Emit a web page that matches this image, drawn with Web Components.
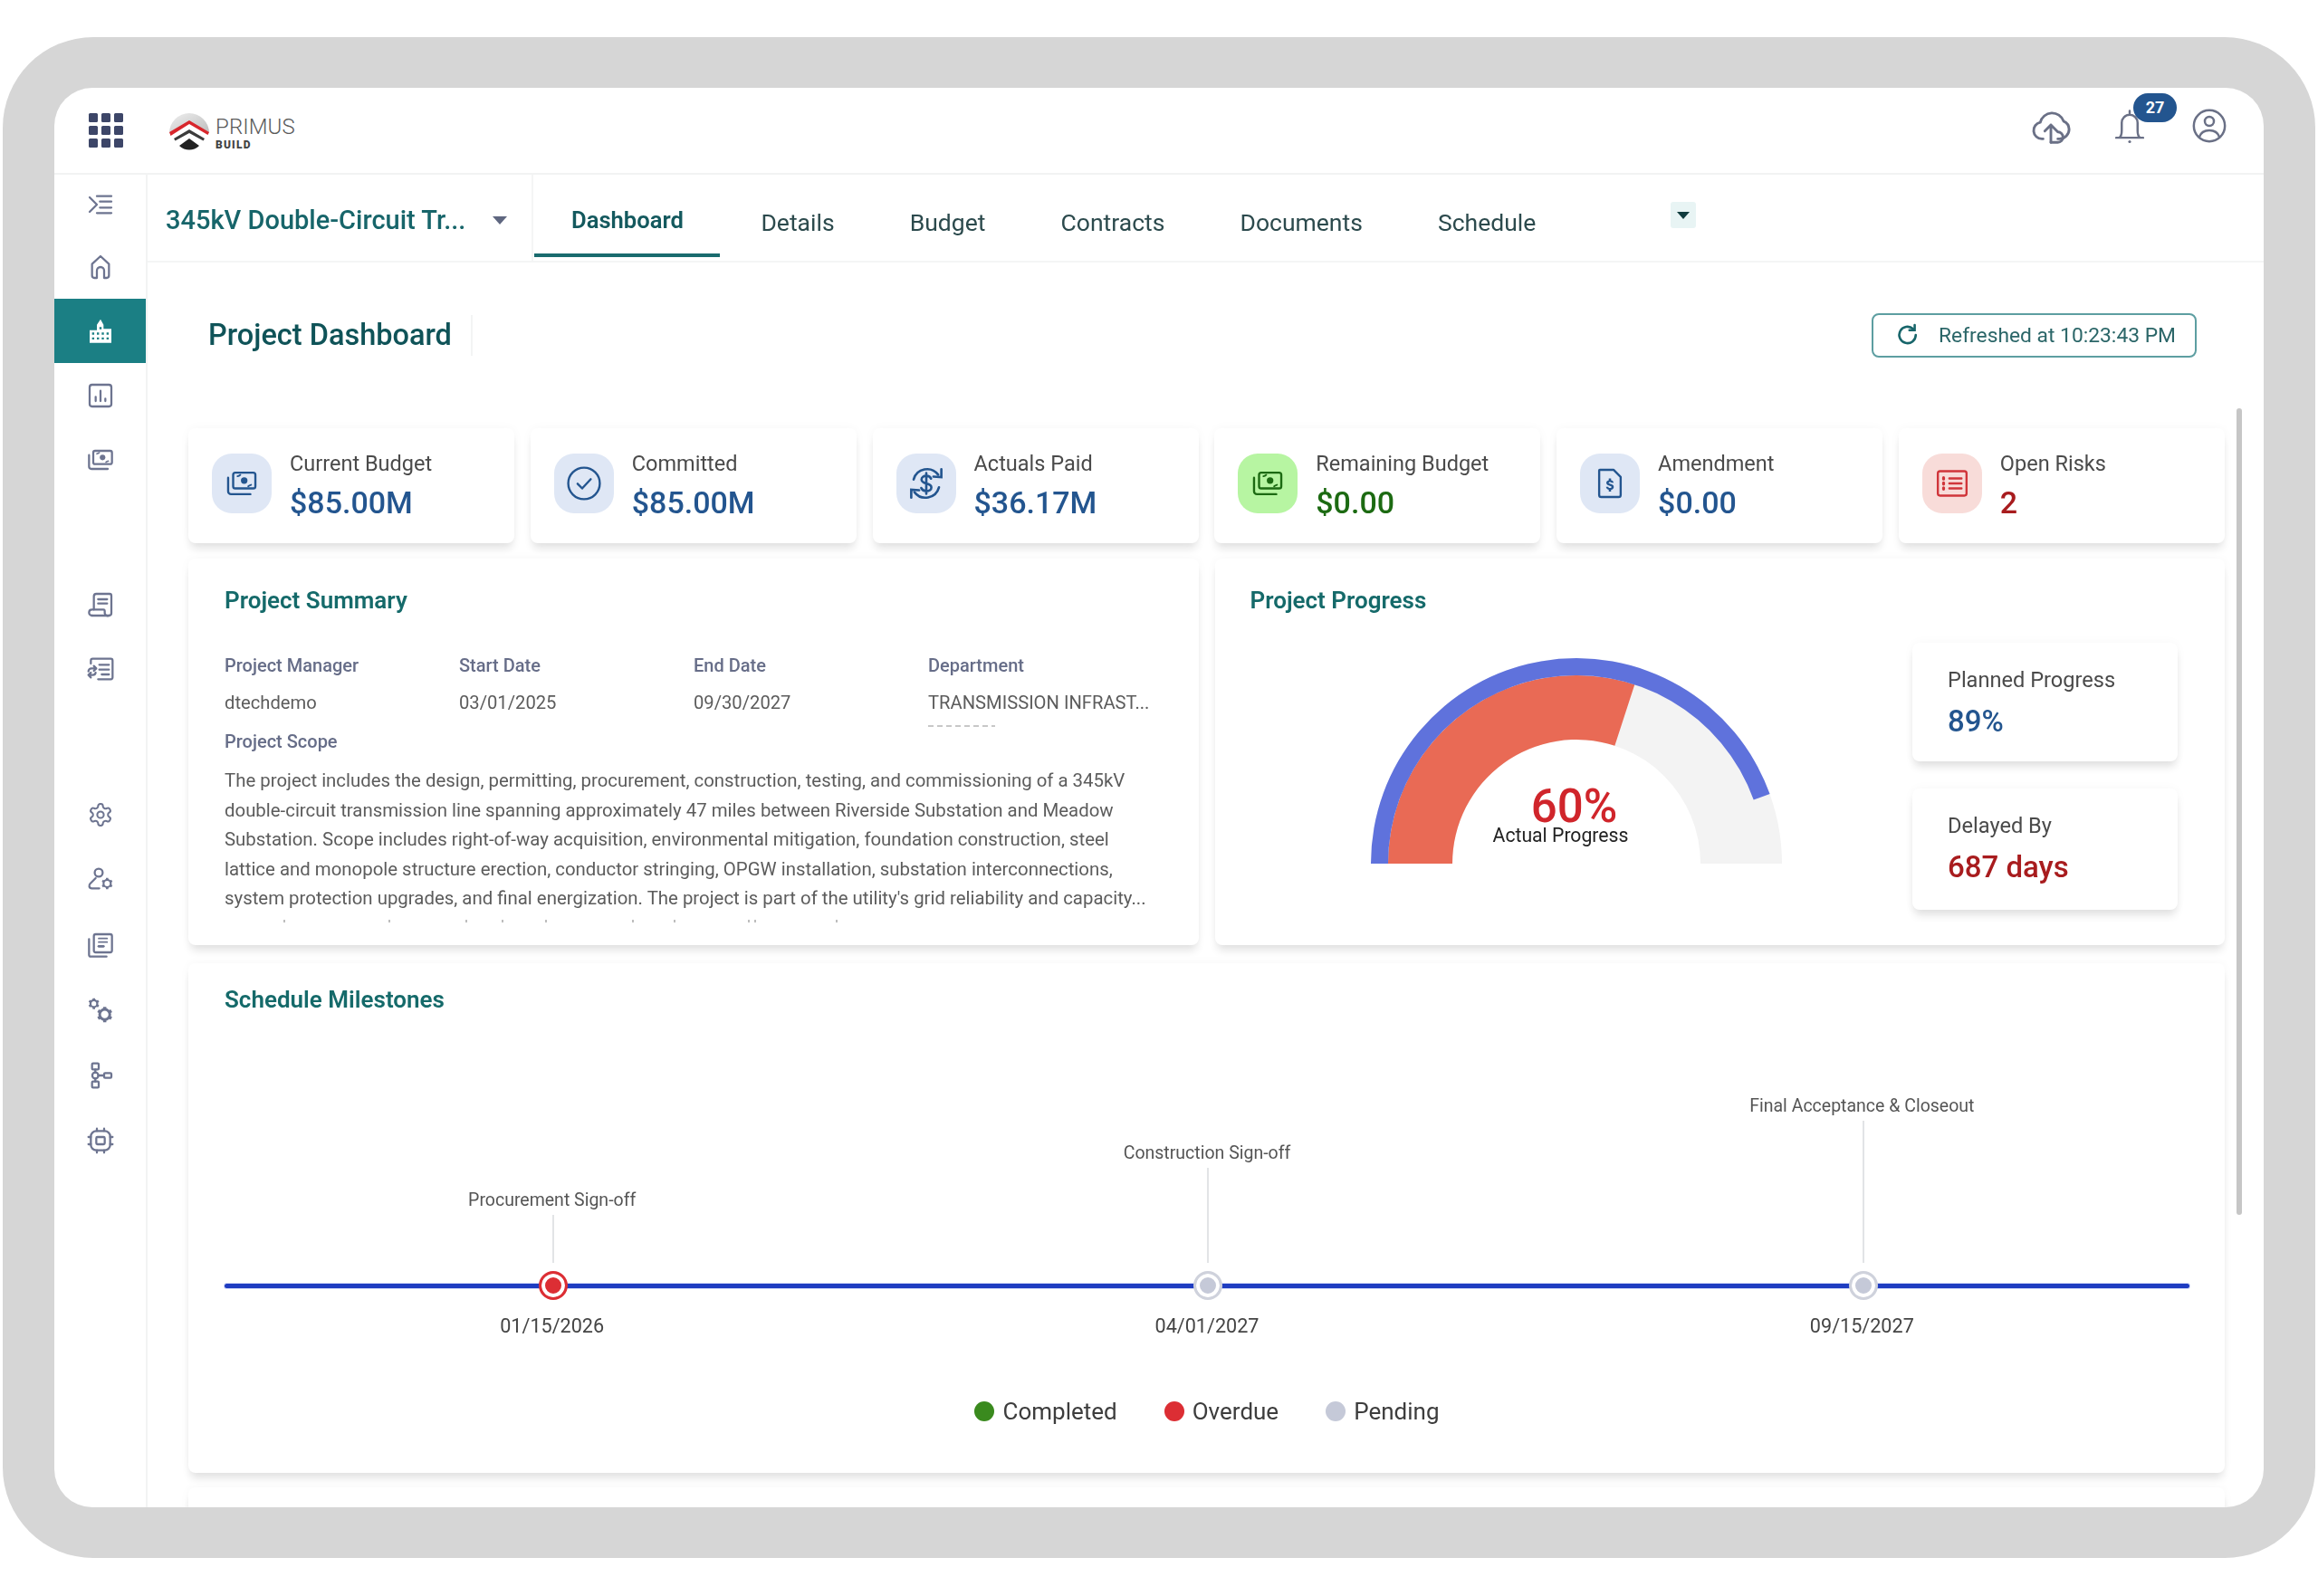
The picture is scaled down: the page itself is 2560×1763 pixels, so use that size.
<!doctype html>
<html lang="en">
<head>
<meta charset="utf-8">
<title>Project Dashboard</title>
<style>
  html, body { margin: 0; padding: 0; background: #fff; }
  body { font-family: Roboto, "Liberation Sans", sans-serif; }
</style>
</head>
<body>
<pb-app>
  <pb-header slot="header"></pb-header>
  <pb-sidebar slot="sidebar"></pb-sidebar>
  <pb-tabs slot="tabs" project="345kV Double-Circuit Tr...">
    <pb-tab active>Dashboard</pb-tab>
    <pb-tab>Details</pb-tab>
    <pb-tab>Budget</pb-tab>
    <pb-tab>Contracts</pb-tab>
    <pb-tab>Documents</pb-tab>
    <pb-tab>Schedule</pb-tab>
  </pb-tabs>
  <pb-title-row slot="title" refreshed="Refreshed at 10:23:43 PM">Project Dashboard</pb-title-row>

  <pb-kpi-row>
    <pb-kpi icon="money" label="Current Budget" value="$85.00M"></pb-kpi>
    <pb-kpi icon="check" label="Committed" value="$85.00M"></pb-kpi>
    <pb-kpi icon="cycle" icon-size="42" label="Actuals Paid" value="$36.17M"></pb-kpi>
    <pb-kpi icon="money" tone="green" label="Remaining Budget" value="$0.00"></pb-kpi>
    <pb-kpi icon="amend" label="Amendment" value="$0.00"></pb-kpi>
    <pb-kpi icon="risk" tone="red" label="Open Risks" value="2"></pb-kpi>
  </pb-kpi-row>

  <pb-split>
    <pb-summary></pb-summary>
    <pb-progress></pb-progress>
  </pb-split>

  <pb-milestones>
    <pb-milestone state="overdue" stem="53" label="Procurement Sign-off" date="01/15/2026"></pb-milestone>
    <pb-milestone state="pending" stem="105" label="Construction Sign-off" date="04/01/2027"></pb-milestone>
    <pb-milestone state="pending" stem="157" label="Final Acceptance &amp; Closeout" date="09/15/2027"></pb-milestone>
  </pb-milestones>
  <pb-next-card></pb-next-card>
</pb-app>

<script>
const GEAR = "M12.22 2h-.44a2 2 0 0 0-2 2v.18a2 2 0 0 1-1 1.73l-.43.25a2 2 0 0 1-2 0l-.15-.08a2 2 0 0 0-2.73.73l-.22.38a2 2 0 0 0 .73 2.73l.15.1a2 2 0 0 1 1 1.72v.51a2 2 0 0 1-1 1.74l-.15.09a2 2 0 0 0-.73 2.73l.22.38a2 2 0 0 0 2.73.73l.15-.08a2 2 0 0 1 2 0l.43.25a2 2 0 0 1 1 1.73V20a2 2 0 0 0 2 2h.44a2 2 0 0 0 2-2v-.18a2 2 0 0 1 1-1.73l.43-.25a2 2 0 0 1 2 0l.15.08a2 2 0 0 0 2.73-.73l.22-.39a2 2 0 0 0-.73-2.73l-.15-.08a2 2 0 0 1-1-1.74v-.5a2 2 0 0 1 1-1.74l.15-.09a2 2 0 0 0 .73-2.73l-.22-.38a2 2 0 0 0-2.73-.73l-.15.08a2 2 0 0 1-2 0l-.43-.25a2 2 0 0 1-1-1.73V4a2 2 0 0 0-2-2z";

// small cog: a ring with stubby teeth, reads better than GEAR under 20px
const cog = (cx, cy, r, w) => {
  let teeth = "";
  for (let i = 0; i < 6; i++) {
    const a = (i * Math.PI) / 3 + Math.PI / 6;
    const c = Math.cos(a);
    const s = Math.sin(a);
    teeth += `M${(cx + r * c).toFixed(2)} ${(cy + r * s).toFixed(2)}L${(cx + (r + w) * c).toFixed(2)} ${(cy + (r + w) * s).toFixed(2)}`;
  }
  return `<circle cx="${cx}" cy="${cy}" r="${r}" stroke-width="${w}"/><path d="${teeth}" stroke-width="${w * 1.2}" stroke-linecap="butt"/>`;
};

const ICONS = {
  indent: `<path d="M3 6l6 6-6 6"/><path d="M9 5h12M11.500 9.500H21M11.500 14.500H21M9 19h12"/>`,
  home: `<path d="M12 3 5 9.500v9.500a2 2 0 0 0 2 2h2v-6a3 3 0 0 1 6 0v6h2a2 2 0 0 0 2-2V9.500z"/>`,
  building: `<path fill="currentColor" stroke="none" fill-rule="evenodd" d="M12 2l2.500 4.500V10H21v11.500H3V11H9V6.500zM5 13v1.800h1.800V13zM9 13v1.800h1.800V13zM13 13v1.800h1.800V13zM17 13v1.800h1.800V13zM5 17v1.800h1.800V17zM9 17v1.800h1.800V17zM13 17v1.800h1.800V17zM17 17v1.800h1.800V17zM11.100 8.500v1.800h1.800V8.500z"/>`,
  chart: `<rect x="3" y="3" width="18" height="18" rx="2"/><path d="M8 16.500v-3.500M12 16.500V8M16 16.500v-2"/>`,
  money: `<rect x="6" y="4.500" width="15.500" height="11" rx="1.500"/><circle cx="13.700" cy="10" r="2.300" fill="currentColor" stroke="none"/><path d="M9 7c1.500-.4 1.700-.8 2-1M18.500 13c-1.500.4-1.700.8-2 1" stroke-width="1.200"/><path d="M2.500 8v9.500a2 2 0 0 0 2 2H18"/>`,
  scroll: `<path d="M6.500 16V5a2 2 0 0 1 2-2h11A1.500 1.500 0 0 1 21 4.500V19a2 2 0 0 1-2 2H5"/><path d="M5 21a2.500 2.500 0 0 1-2.500-2.500c0-1.500 1-2.500 2.500-2.500h9.500c.8 0 1 .6 1 1.500V19a2.500 2.500 0 0 0 3.500 2"/><path d="M10 7.500h7.500M10 11h7.500"/>`,
  listsync: `<path d="M4 7.500V5a1.500 1.500 0 0 1 1.500-1.500h15A1.500 1.500 0 0 1 22 5v14a1.500 1.500 0 0 1-1.500 1.500H10"/><path d="M11 8.500h8M11 12.500h8M13 16.500h6"/><path d="M8 11.500H4.500A2.500 2.500 0 0 0 2 14M6.500 9.500l2 2-2 2M2 17h3.500A2.500 2.500 0 0 0 8 15M4 15l-2 2 2 2"/>`,
  gear: `<g transform="translate(1.200 1.200) scale(.9)"><path d="${GEAR}"/><circle cx="12" cy="12" r="3"/></g>`,
  usergear: `<circle cx="10.500" cy="6" r="3.300"/><path d="M8 10.500 3.500 15c-1.500 1.500-1 4 1.300 4H11"/>${cog(17.500, 15, 3, 1.600)}`,
  docstack: `<rect x="6.500" y="3" width="15" height="15" rx="1.500"/><path d="M10.500 6.500h7M10.500 9.500h7" stroke-width="1.300"/><path d="M10.500 13h4" stroke-width="2"/><path d="M2.500 7v13a1.500 1.500 0 0 0 1.500 1.500h13"/>`,
  gears: `${cog(6.500, 6.500, 2.800, 1.700)}${cog(15.500, 15.500, 4.200, 2.200)}`,
  flow: `<rect x="5" y="2" width="5.500" height="5" rx=".8"/><rect x="5" y="17" width="5.500" height="5" rx=".8"/><circle cx="7.700" cy="12" r="2.500"/><rect x="15" y="10" width="6" height="4" rx=".8"/><path d="M7.700 7v2.500M7.700 14.500V17M10.200 12H15"/>`,
  chip: `<rect x="4" y="4" width="16" height="16" rx="4.500"/><rect x="8.500" y="9" width="7" height="6" rx="1"/><path d="M9 2v2M15 2v2M9 20v2M15 20v2M2 9h2M2 15h2M20 9h2M20 15h2"/>`,
  check: `<circle cx="12" cy="12" r="11"/><path d="M7.500 12.200l3.200 3.300 6-6.500"/>`,
  cycle: `<path d="M4 9.500A8.800 8.800 0 0 1 19.500 6.500M20 14.500A8.800 8.800 0 0 1 4.500 17.500"/><path d="M21.500 3v5l-5-.3M2.500 21v-5l5 .3" stroke-linejoin="miter"/><path d="M15 9c-.5-1.300-1.500-1.800-3-1.800-1.700 0-3 .9-3 2.300 0 3.300 6.200 1.700 6.200 5 0 1.400-1.400 2.300-3.200 2.300-1.500 0-2.700-.6-3.200-1.900M12 5.500v13"/>`,
  amend: `<path d="M5 2.500h9.500L19.500 7.500V20a1.500 1.500 0 0 1-1.500 1.500H6A1.500 1.500 0 0 1 4.500 20V3a.5.5 0 0 1 .5-.5z"/><path fill="currentColor" stroke="none" d="M11.200 8.500h1.600v1.300c1 .2 1.700.8 1.800 1.800h-1.500c-.1-.4-.4-.6-1-.6s-1 .2-1 .6c0 1 3.600.5 3.600 2.900 0 1-.8 1.700-1.900 1.900v1.300h-1.600V16.400c-1.100-.2-1.900-1-1.900-2h1.500c.1.500.5.800 1.200.8s1.100-.3 1.100-.7c0-1.100-3.600-.5-3.600-2.900 0-.9.700-1.600 1.700-1.800z"/>`,
  risk: `<rect x="2" y="3.500" width="20" height="17" rx="1.500"/><path d="M6 8v1M6 11.500v1M6 15v1" stroke-width="2"/><path d="M10 8.500h8.500M10 12h8.500M10 15.500h8.500"/>`,
  cloud: `<path d="M7.500 19.500H6.800a4.800 4.800 0 0 1-.9-9.500 7 7 0 0 1 13.400-.7A5.300 5.300 0 0 1 22.500 14a5.500 5.500 0 0 1-5.500 5.500h-1"/><path d="M12 21.500V11.500M8.500 15l3.500-3.500 3.500 3.500"/><path d="M12 21.500h4a3 3 0 0 0 0-6"/>`,
  bell: `<path d="M12 2.500v1.500M5.500 19.500c1.300-1 1.500-2.500 1.500-4.500v-5a5 5 0 0 1 10 0v5c0 2 .2 3.500 1.500 4.500zM3.500 19.500h17"/><circle cx="12" cy="22" r=".9" fill="currentColor" stroke="none"/>`,
  user: `<circle cx="12" cy="12" r="10.300"/><circle cx="12" cy="9" r="3"/><path d="M5.300 19.500c1-3 3.700-4.500 6.700-4.500s5.700 1.500 6.700 4.500"/>`,
  refresh: `<path d="M19.500 12a7.800 7.800 0 1 1-2.600-5.800"/><path d="M18.500 2.500v5h-5" stroke-linejoin="miter"/>`
};

class PbIcon extends HTMLElement {
  connectedCallback() {
    const name = this.getAttribute("name");
    const size = this.getAttribute("size") || 24;
    const stroke = this.getAttribute("stroke") || 1.8;
    this.attachShadow({ mode: "open" });
    this.shadowRoot.innerHTML = `
      <style>
        :host { display: inline-flex; flex: none; }
        svg { display: block; fill: none; stroke: currentColor; stroke-linecap: round; stroke-linejoin: round; }
      </style>
      <svg width="${size}" height="${size}" viewBox="0 0 24 24" stroke-width="${stroke}">${ICONS[name]}</svg>`;
  }
}
customElements.define("pb-icon", PbIcon);

class PbApp extends HTMLElement {
  constructor() {
    super();
    this.attachShadow({ mode: "open" });
    this.shadowRoot.innerHTML = `
      <style>
        :host { display: block; box-sizing: border-box; height: 1763px; padding: 41px 3px 42px 3px; }
        .frame { box-sizing: border-box; height: 1680px; padding: 56px 57px 56px 57px; background: #d6d6d6; border-radius: 100px; }
        .screen {
          height: 100%; display: grid; grid-template-columns: 103px minmax(0, 1fr); grid-template-rows: 96px 97px 158px 1fr;
          background: #fff; border-radius: 42px; overflow: hidden; position: relative; filter: blur(.7px);
        }
        .head { grid-column: 1 / 3; }
        .side { grid-row: 2 / 5; }
        .main { box-sizing: border-box; min-height: 0; padding: 25px 43px 0 45px; display: flex; flex-direction: column; overflow: hidden; }
        .thumb { position: absolute; left: 2410px; top: 354px; width: 6px; height: 891px; background: #c6c6c6; border-radius: 3px; }
      </style>
      <div class="frame">
        <div class="screen">
          <div class="head"><slot name="header"></slot></div>
          <div class="side"><slot name="sidebar"></slot></div>
          <slot name="tabs"></slot>
          <slot name="title"></slot>
          <div class="main"><slot></slot></div>
          <div class="thumb"></div>
        </div>
      </div>`;
  }
}
customElements.define("pb-app", PbApp);

class PbHeader extends HTMLElement {
  constructor() {
    super();
    this.attachShadow({ mode: "open" });
    this.shadowRoot.innerHTML = `
      <style>
        :host { display: flex; box-sizing: border-box; height: 96px; align-items: center; padding: 0 40px 0 38px; border-bottom: 2px solid #f2f3f3; }
        .apps { display: grid; grid-template-columns: repeat(3, 10px); grid-auto-rows: 10px; gap: 4px; }
        .apps i { background: #3d4668; border-radius: 1.5px; }
        .logo { display: flex; align-items: center; gap: 6px; margin-left: 50px; }
        .word { display: flex; flex-direction: column; color: #555; padding-top: 5px; }
        .word b { font: 300 24px/24px Roboto, sans-serif; color: #5a5a5a; letter-spacing: .1px; }
        .word span { font: 900 12px/12px Roboto, sans-serif; letter-spacing: 1.2px; color: #444; margin-top: 2px; }
        .tools { margin-left: auto; display: flex; align-items: center; color: #6a7086; padding-bottom: 11px; }
        .bell { position: relative; display: flex; margin: 0 47px 0 43px; }
        .badge { position: absolute; left: 25px; top: -15px; width: 48px; height: 32px; background: #23558f; color: #fff; border-radius: 16px; font: 700 18px/32px Roboto, sans-serif; text-align: center; }
      </style>
      <div class="apps">${"<i></i>".repeat(9)}</div>
      <div class="logo">
        <svg width="46" height="44" viewBox="0 0 46 44">
          <defs><linearGradient id="dome" x1="0" y1="0" x2="1" y2="1"><stop offset="0" stop-color="#efefef"/><stop offset="1" stop-color="#bdbdbd"/></linearGradient></defs>
          <path d="M1 25a22 22 0 0 1 44 0L23 12z" fill="url(#dome)"/>
          <path d="M1 24 23 11l22 13-1.500 3L23 15 2.500 28z" fill="#d8262c"/>
          <path d="M6 31 23 21l17 10-1.500 2.500L23 25 7.500 33.500z" fill="#3c3c3c"/>
          <path d="M12 39 23 31l11 8c-3 3-7 4.500-11 4.500S15 42 12 39z" fill="#222"/>
        </svg>
        <div class="word"><b>PRIMUS</b><span>BUILD</span></div>
      </div>
      <div class="tools">
        <pb-icon name="cloud" size="46" stroke="1.500"></pb-icon>
        <div class="bell"><pb-icon name="bell" size="42" stroke="1.400"></pb-icon><div class="badge">27</div></div>
        <pb-icon name="user" size="40" stroke="1.500"></pb-icon>
      </div>`;
  }
}
customElements.define("pb-header", PbHeader);

class PbSidebar extends HTMLElement {
  constructor() {
    super();
    this.attachShadow({ mode: "open" });
    const items = [
      ["indent"], ["home"], ["building", "on"], ["chart"], ["money", "brk"],
      ["scroll"], ["listsync", "brk"],
      ["gear", "low"], ["usergear", "low"], ["docstack", "low"], ["gears", "low"], ["flow", "low"], ["chip", "low"]
    ];
    this.shadowRoot.innerHTML = `
      <style>
        :host { display: block; box-sizing: border-box; height: 100%; border-right: 2px solid #f2f3f3; color: #6d7490; }
        .item { height: 71px; display: flex; align-items: center; justify-content: center; }
        .item:first-of-type { height: 66px; }
        .low { height: 72px; }
        .on { background: #1b7f84; color: #fff; }
        .brk { margin-bottom: 89.500px; }
      </style>
      ${items.map(([n, c]) => `<div class="item ${c || ""}"><pb-icon name="${n}" size="32" stroke="1.700"></pb-icon></div>`).join("")}`;
  }
}
customElements.define("pb-sidebar", PbSidebar);

class PbTabs extends HTMLElement {
  connectedCallback() {
    this.attachShadow({ mode: "open" });
    this.shadowRoot.innerHTML = `
      <style>
        :host { display: flex; box-sizing: border-box; height: 97px; border-bottom: 2px solid #f4f5f5; }
        .project { width: 426px; flex: none; box-sizing: border-box; padding: 5px 0 0 20px; display: flex; align-items: center; border-right: 2px solid #f4f5f5; color: #17656a; font-size: 29px; font-weight: 500; white-space: nowrap; }
        .caret { margin-left: 30px; width: 0; height: 0; border: 8px solid transparent; border-top: 9px solid #5f6780; border-bottom: 0; }
        .more { align-self: flex-start; margin: 30px 0 0 107px; width: 28px; height: 29px; background: #e8f4f4; border-radius: 3px; display: flex; align-items: center; justify-content: center; }
        .more i { width: 0; height: 0; border: 7px solid transparent; border-top: 8px solid #0f3b3d; border-bottom: 0; }
      </style>
      <div class="project">${this.getAttribute("project")}<span class="caret"></span></div>
      <slot></slot>
      <div class="more"><i></i></div>`;
  }
}
customElements.define("pb-tabs", PbTabs);

class PbTab extends HTMLElement {
  constructor() {
    super();
    this.attachShadow({ mode: "open" });
    this.shadowRoot.innerHTML = `
      <style>
        :host { display: flex; align-items: center; box-sizing: border-box; height: 91px; padding: 13px 41.600px 0; color: #2c4a4d; font-size: 26.500px; white-space: nowrap; }
        :host([active]) { padding: 12px 40px 0 41px; margin: 0 4px 0 1px; color: #14595e; font-size: 25.600px; font-weight: 600; border-bottom: 4px solid #1a6b6e; }
      </style>
      <slot></slot>`;
  }
}
customElements.define("pb-tab", PbTab);

class PbTitleRow extends HTMLElement {
  connectedCallback() {
    this.attachShadow({ mode: "open" });
    this.shadowRoot.innerHTML = `
      <style>
        :host { display: flex; align-items: center; height: 158px; box-sizing: border-box; padding: 2px 74px 0 67px; }
        h1 { margin: 0; padding-right: 21px; border-right: 2px solid #f3f4f4; height: 45px; font-size: 32.500px; line-height: 45px; font-weight: 500; color: #0f5358; white-space: nowrap; }
        .refresh { margin-left: auto; box-sizing: border-box; width: 359px; height: 49px; display: flex; align-items: center; gap: 20px; padding-left: 24px; border: 2px solid #5d9ea1; border-radius: 8px; color: #2b6668; font-size: 22.800px; white-space: nowrap; }
        pb-icon { color: #17656a; }
      </style>
      <h1><slot></slot></h1>
      <div class="refresh"><pb-icon name="refresh" size="28" stroke="2.200"></pb-icon>${this.getAttribute("refreshed")}</div>`;
  }
}
customElements.define("pb-title-row", PbTitleRow);

class PbKpiRow extends HTMLElement {
  constructor() {
    super();
    this.attachShadow({ mode: "open" });
    this.shadowRoot.innerHTML = `
      <style>:host { display: grid; grid-template-columns: repeat(6, minmax(0, 1fr)); gap: 17.600px; height: 127px; flex: none; margin-bottom: 17px; }</style>
      <slot></slot>`;
  }
}
customElements.define("pb-kpi-row", PbKpiRow);

const CARD_SHADOW = "0 8px 10px -2px rgba(0,0,0,.11), 0 0 12px rgba(0,0,0,.035)";

class PbKpi extends HTMLElement {
  connectedCallback() {
    const tones = {
      blue: ["#dfe7f5", "#23558f"],
      green: ["#b7f5a2", "#1c6a12"],
      red: ["#f8dcd9", "#a81c1e"]
    };
    const [bg, fg] = tones[this.getAttribute("tone") || "blue"];
    const iconFg = this.getAttribute("tone") === "red" ? "#d0353a" : fg;
    this.attachShadow({ mode: "open" });
    this.shadowRoot.innerHTML = `
      <style>
        :host { display: flex; align-items: flex-start; box-sizing: border-box; padding: 28px 0 0 26px; gap: 20px; background: #fff; border-radius: 8px; box-shadow: ${CARD_SHADOW}; }
        .ic { width: 66px; height: 66px; border-radius: 22px; background: ${bg}; color: ${iconFg}; display: flex; align-items: center; justify-content: center; }
        .label { font-size: 23.500px; line-height: 28px; color: #4a4a4a; margin-top: -3px; white-space: nowrap; }
        .value { font-size: 34px; line-height: 40px; font-weight: 500; color: ${fg}; margin-top: 9px; white-space: nowrap; }
      </style>
      <div class="ic"><pb-icon name="${this.getAttribute("icon")}" size="${this.getAttribute("icon-size") || 38}" stroke="1.500"></pb-icon></div>
      <div>
        <div class="label">${this.getAttribute("label")}</div>
        <div class="value">${this.getAttribute("value")}</div>
      </div>`;
  }
}
customElements.define("pb-kpi", PbKpi);

class PbSplit extends HTMLElement {
  constructor() {
    super();
    this.attachShadow({ mode: "open" });
    this.shadowRoot.innerHTML = `
      <style>:host { display: grid; grid-template-columns: repeat(2, minmax(0, 1fr)); gap: 18px; height: 427px; flex: none; margin-bottom: 20px; }</style>
      <slot></slot>`;
  }
}
customElements.define("pb-split", PbSplit);

const CARD_CSS = `
  :host { display: block; box-sizing: border-box; background: #fff; border-radius: 8px; box-shadow: ${CARD_SHADOW}; }
  h2 { margin: 0; font-size: 26px; line-height: 32px; font-weight: 600; color: #156a6a; white-space: nowrap; }
`;

class PbSummary extends HTMLElement {
  constructor() {
    super();
    this.attachShadow({ mode: "open" });
    const meta = [
      ["Project Manager", "dtechdemo"],
      ["Start Date", "03/01/2025"],
      ["End Date", "09/30/2027"],
      ["Department", "TRANSMISSION INFRAST..."]
    ];
    const scope = [
      "The project includes the design, permitting, procurement, construction, testing, and commissioning of a 345kV",
      "double-circuit transmission line spanning approximately 47 miles between Riverside Substation and Meadow",
      "Substation. Scope includes right-of-way acquisition, environmental mitigation, foundation construction, steel",
      "lattice and monopole structure erection, conductor stringing, OPGW installation, substation interconnections,",
      "system protection upgrades, and final energization. The project is part of the utility's grid reliability and capacity..."
    ];
    this.shadowRoot.innerHTML = `
      <style>
        ${CARD_CSS}
        :host { padding: 30px 40px 0 40px; }
        .meta { display: grid; grid-template-columns: repeat(4, 259px); margin-top: 44px; }
        .cell { position: relative; }
        .k { font-size: 20px; line-height: 24px; font-weight: 500; color: #666d88; white-space: nowrap; }
        .v { font-size: 20.200px; line-height: 24px; color: #5c5c5c; margin-top: 17px; white-space: nowrap; }
        .sliver { position: absolute; left: 0; top: 78px; width: 74px; height: 2px; background: repeating-linear-gradient(90deg, #c8c8c8 0 6px, transparent 6px 10px); }
        .scope { font-size: 20px; line-height: 24px; font-weight: 500; color: #666d88; margin-top: 19px; }
        .text { margin-top: 15px; font-size: 20.400px; line-height: 32.500px; color: #5c5c5c; white-space: nowrap; }
        .ticks { display: block; margin-top: 7px; }
      </style>
      <h2>Project Summary</h2>
      <div class="meta">
        ${meta.map(([k, v], i) => `<div class="cell"><div class="k">${k}</div><div class="v">${v}</div>${i === 3 ? '<div class="sliver"></div>' : ""}</div>`).join("")}
      </div>
      <div class="scope">Project Scope</div>
      <div class="text">${scope.map((l) => `<div>${l}</div>`).join("")}</div>
      <svg class="ticks" width="700" height="4" stroke="#bdbdbd" stroke-width="2"><path d="M66 0v3M182 0v3M267 0v3M307 0v3M355 0v3M451 0v3M497 0v3M579 0v3M586 0v3M676 0v3"/></svg>`;
  }
}
customElements.define("pb-summary", PbSummary);

class PbGauge extends HTMLElement {
  constructor() {
    super();
    this.attachShadow({ mode: "open" });
    const C = 227;
    const pt = (r, f) => {
      const a = Math.PI * (1 - f);
      return `${(C + r * Math.cos(a)).toFixed(2)} ${(C - r * Math.sin(a)).toFixed(2)}`;
    };
    // ring segment between two fractions of the half circle
    const seg = (r0, r1, f0, f1) => `M${pt(r1, f0)}A${r1} ${r1} 0 0 1 ${pt(r1, f1)}L${pt(r0, f1)}A${r0} ${r0} 0 0 0 ${pt(r0, f0)}Z`;
    this.shadowRoot.innerHTML = `
      <style>
        :host { display: block; position: relative; width: 454px; height: 227px; }
        svg { display: block; }
        .pct { position: absolute; left: 130px; width: 190px; top: 143px; text-align: center; font-size: 51px; font-weight: 500; line-height: 42px; color: #d0252b; }
        .cap { position: absolute; left: 99px; width: 222px; top: 185px; text-align: center; font-size: 21.200px; line-height: 22px; color: #222; }
      </style>
      <svg width="454" height="227" viewBox="0 0 454 227">
        <path d="${seg(137, 227, 0, 1)}" fill="#f3f3f3"/>
        <path d="${seg(137, 208, 0, .6)}" fill="#e96a55"/>
        <path d="${seg(208, 227, 0, .89)}" fill="#5f72dc"/>
      </svg>
      <div class="pct">60%</div>
      <div class="cap">Actual Progress</div>`;
  }
}
customElements.define("pb-gauge", PbGauge);

class PbStat extends HTMLElement {
  connectedCallback() {
    this.attachShadow({ mode: "open" });
    this.shadowRoot.innerHTML = `
      <style>
        :host { display: block; box-sizing: border-box; width: 293px; height: 131px; padding: 26px 0 0 39px; background: #fff; border-radius: 8px; box-shadow: ${CARD_SHADOW}; }
        :host(:last-child) { height: 134px; }
        .label { font-size: 23.600px; line-height: 30px; color: #4a4a4a; white-space: nowrap; }
        .value { font-size: 33px; line-height: 40px; font-weight: 500; margin-top: 11px; color: ${this.getAttribute("color")}; white-space: nowrap; }
      </style>
      <div class="label">${this.getAttribute("label")}</div>
      <div class="value">${this.getAttribute("value")}</div>`;
  }
}
customElements.define("pb-stat", PbStat);

class PbProgress extends HTMLElement {
  constructor() {
    super();
    this.attachShadow({ mode: "open" });
    this.shadowRoot.innerHTML = `
      <style>
        ${CARD_CSS}
        :host { padding: 30px 52px 0 39px; }
        .body { display: flex; justify-content: space-between; }
        pb-gauge { margin: 48px 0 0 133px; }
        .stats { display: flex; flex-direction: column; gap: 30px; margin-top: 31px; }
      </style>
      <h2>Project Progress</h2>
      <div class="body">
        <pb-gauge></pb-gauge>
        <div class="stats">
          <pb-stat label="Planned Progress" value="89%" color="#23558f"></pb-stat>
          <pb-stat label="Delayed By" value="687 days" color="#a81c1e"></pb-stat>
        </div>
      </div>`;
  }
}
customElements.define("pb-progress", PbProgress);

class PbMilestones extends HTMLElement {
  constructor() {
    super();
    this.attachShadow({ mode: "open" });
    this.shadowRoot.innerHTML = `
      <style>
        ${CARD_CSS}
        :host { flex: none; height: 563px; padding: 24px 39px 0 40px; margin-bottom: 16px; }
        .track { position: relative; height: 358px; display: grid; grid-template-columns: repeat(3, minmax(0, 1fr)); align-items: end; }
        .line { position: absolute; left: 0; right: 0; bottom: 55.500px; height: 5px; background: #1f3dc1; border-radius: 3px; box-shadow: 0 0 0 1px rgba(120,140,235,.35); }
        .legend { display: flex; justify-content: center; gap: 52px; margin-top: 65px; font-size: 26px; line-height: 32px; color: #3d3d3d; }
        .legend span { display: flex; align-items: center; gap: 9px; }
        .legend i { width: 22px; height: 22px; border-radius: 50%; }
      </style>
      <h2>Schedule Milestones</h2>
      <div class="track">
        <div class="line"></div>
        <slot></slot>
      </div>
      <div class="legend">
        <span><i style="background:#3a8a1e"></i>Completed</span>
        <span><i style="background:#dc2e34"></i>Overdue</span>
        <span><i style="background:#c5c9d8"></i>Pending</span>
      </div>`;
  }
}
customElements.define("pb-milestones", PbMilestones);

class PbMilestone extends HTMLElement {
  connectedCallback() {
    const c = this.getAttribute("state") === "overdue"
      ? { ring: "#dc2e34", dot: "#dc2e34" }
      : { ring: "#cfd2dc", dot: "#c5c9d8" };
    this.attachShadow({ mode: "open" });
    this.shadowRoot.innerHTML = `
      <style>
        :host { position: relative; display: flex; flex-direction: column; align-items: center; }
        .label { font-size: 19.500px; line-height: 24px; color: #555; white-space: nowrap; }
        .stem { width: 2px; height: ${this.getAttribute("stem")}px; background: #e2e4e6; margin: 4px 0 9px 3px; }
        .dot { box-sizing: border-box; width: 32px; height: 32px; border-radius: 50%; border: 3px solid ${c.ring}; background: ${c.dot}; box-shadow: inset 0 0 0 4px #fff; margin-left: 3px; }
        .date { font-size: 21.600px; line-height: 26px; color: #444; margin-top: 16px; white-space: nowrap; }
      </style>
      <div class="label">${this.getAttribute("label")}</div>
      <div class="stem"></div>
      <div class="dot"></div>
      <div class="date">${this.getAttribute("date")}</div>`;
  }
}
customElements.define("pb-milestone", PbMilestone);

class PbNextCard extends HTMLElement {
  constructor() {
    super();
    this.attachShadow({ mode: "open" });
    this.shadowRoot.innerHTML = `<style>${CARD_CSS} :host { flex: none; height: 120px; }</style>`;
  }
}
customElements.define("pb-next-card", PbNextCard);
</script>
</body>
</html>
